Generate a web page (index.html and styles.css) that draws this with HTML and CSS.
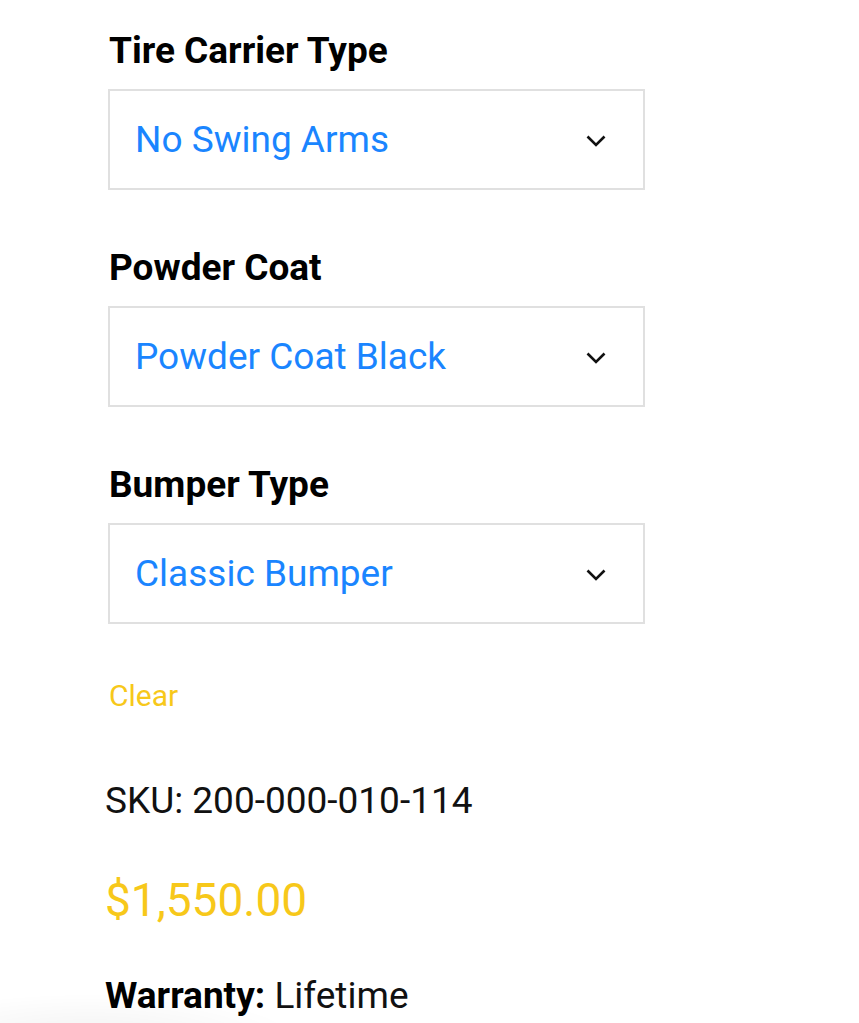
FILE: index.html
```html
<!DOCTYPE html>
<html lang="en">
<head>
<meta charset="utf-8">
<title>Product options</title>
<link rel="stylesheet" href="styles.css">
</head>
<body>
<main class="product">
  <div class="option">
    <label class="option-label">Tire Carrier Type</label>
    <div class="select">
      <span class="select-value">No Swing Arms</span>
      <svg class="chevron" viewBox="0 0 20 12" width="20" height="12"><path d="M1.5 1.5 L10 10 L18.5 1.5" fill="none" stroke="#111" stroke-width="2.6"/></svg>
    </div>
  </div>
  <div class="option">
    <label class="option-label">Powder Coat</label>
    <div class="select">
      <span class="select-value">Powder Coat Black</span>
      <svg class="chevron" viewBox="0 0 20 12" width="20" height="12"><path d="M1.5 1.5 L10 10 L18.5 1.5" fill="none" stroke="#111" stroke-width="2.6"/></svg>
    </div>
  </div>
  <div class="option">
    <label class="option-label">Bumper Type</label>
    <div class="select">
      <span class="select-value">Classic Bumper</span>
      <svg class="chevron" viewBox="0 0 20 12" width="20" height="12"><path d="M1.5 1.5 L10 10 L18.5 1.5" fill="none" stroke="#111" stroke-width="2.6"/></svg>
    </div>
  </div>
  <a class="clear">Clear</a>
  <div class="meta">
    <p class="sku">SKU: 200-000-010-114</p>
    <p class="price">$1,550.00</p>
    <p class="warranty"><strong>Warranty:</strong> Lifetime</p>
  </div>
</main>
<div class="corner-shadow"></div>
</body>
</html>
```

FILE: styles.css
```css
html, body {
  margin: 0;
  padding: 0;
  background: #ffffff;
}
body {
  font-family: Roboto, "Liberation Sans", Arial, sans-serif;
  color: #111;
  height: 1023px;
  overflow: hidden;
}
.product {
  display: flex;
  flex-direction: column;
  padding: 29px 0 0 108px;
  width: 537px;
}
.option {
  display: flex;
  flex-direction: column;
}
.option + .option {
  margin-top: 56px;
}
.option-label {
  font-weight: 700;
  font-size: 37px;
  line-height: 44px;
  padding-left: 1px;
  margin-bottom: 16px;
  color: #000;
}
.select {
  box-sizing: border-box;
  height: 101px;
  border: 2px solid #e0e0e0;
  display: flex;
  align-items: center;
  justify-content: space-between;
  padding: 0 37px 0 25px;
}
.select-value {
  color: #1a85ff;
  font-size: 37px;
  line-height: 44px;
}
.chevron {
  display: block;
  margin-top: 2px;
}
.clear {
  display: block;
  color: #f7c81a;
  font-size: 30px;
  line-height: 36px;
  margin-top: 54px;
  padding-left: 1px;
}
.meta {
  display: flex;
  flex-direction: column;
  margin-left: -3px;
  margin-top: 65px;
}
.meta p {
  margin: 0;
}
.sku {
  font-size: 37px;
  line-height: 44px;
}
.price {
  color: #f7c81a;
  font-size: 46px;
  line-height: 54px;
  margin-top: 50px !important;
}
.warranty {
  font-size: 37px;
  line-height: 44px;
  margin-top: 47px !important;
}
.warranty strong {
  font-weight: 700;
  color: #000;
}
.corner-shadow {
  position: fixed;
  left: -120px;
  bottom: -60px;
  width: 420px;
  height: 90px;
  background: radial-gradient(ellipse at center, rgba(0,0,0,0.05), rgba(0,0,0,0) 70%);
  pointer-events: none;
}
```
